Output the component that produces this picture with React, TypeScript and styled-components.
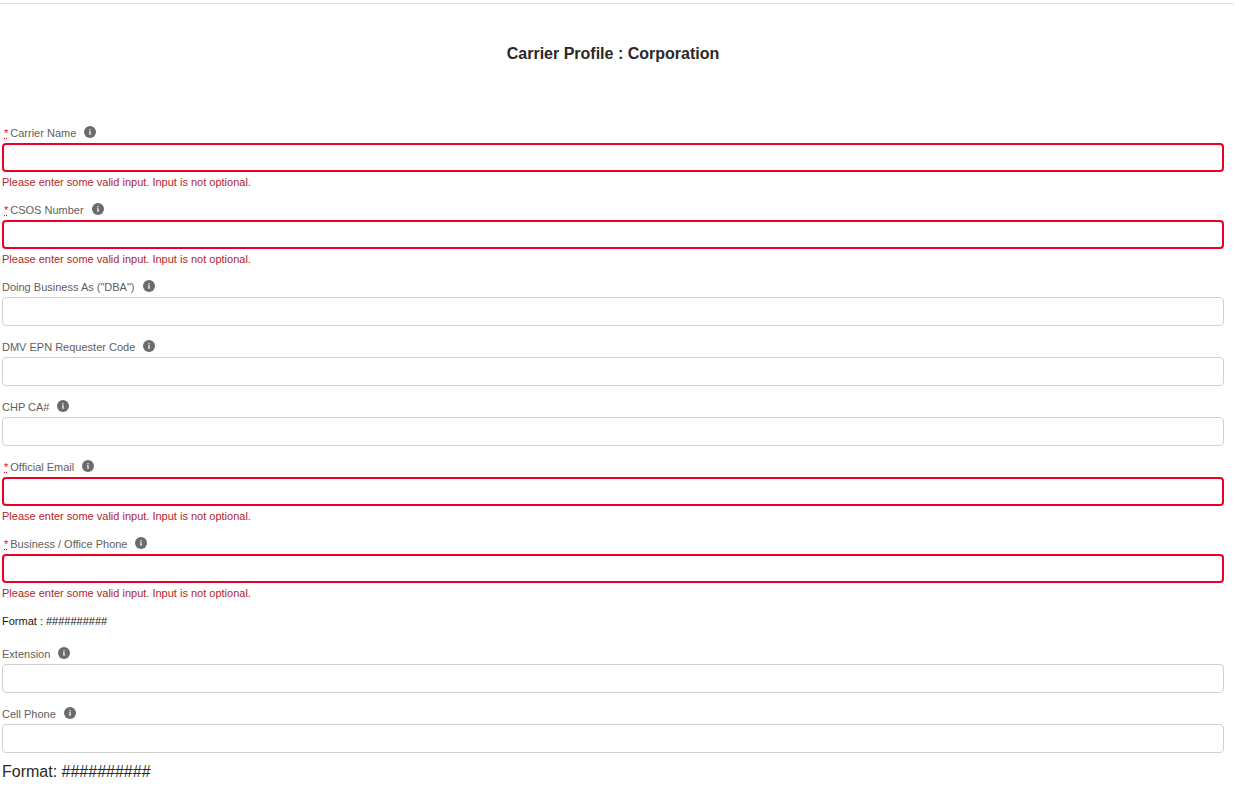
import React, { useId } from "react";
import styled, { createGlobalStyle } from "styled-components";

const GlobalStyle = createGlobalStyle`
  *, *::before, *::after { box-sizing: border-box; }
  body {
    margin: 0;
    background: #ffffff;
    color: #2b2826;
    font-family: "Liberation Sans", Arial, sans-serif;
  }
`;

const Page = styled.main`
  padding: 3px 5px 5px 0;
`;

const Divider = styled.hr`
  height: 1px;
  margin: 0;
  border: 0;
  background: #e2e2e2;
`;

const Form = styled.form`
  display: flex;
  flex-direction: column;
  gap: 13px;
  padding: 38px 10px 0 2px;
`;

const Title = styled.h1`
  margin: 0 0 46px;
  font-size: 16px;
  line-height: 24px;
  font-weight: 700;
  text-align: center;
`;

const FieldBox = styled.div`
  display: flex;
  flex-direction: column;
`;

const LabelRow = styled.div`
  display: flex;
  align-items: flex-start;
  gap: 8px;
  height: 18px;
`;

const Label = styled.label`
  color: #5f5e5c;
  font-size: 11px;
  line-height: 16px;
`;

const Required = styled.abbr`
  margin: 0 2px;
  color: #ea001e;
  text-decoration: underline dotted;
`;

const InfoButton = styled.button`
  display: flex;
  padding: 1px 0;
  border: 0;
  background: transparent;
  color: #6b6b6e;
  cursor: pointer;
`;

const TextInput = styled.input<{ $invalid?: boolean }>`
  width: 100%;
  height: 29px;
  padding: 0 12px;
  border: ${(p) => (p.$invalid ? "2px solid #ea0023" : "1px solid #d2d1d0")};
  border-radius: 4px;
  background: #ffffff;
  color: inherit;
  font: inherit;
  font-size: 12px;
  outline: none;
`;

const ErrorText = styled.div`
  padding-top: 3px;
  color: #b3262b;
  font-size: 11px;
  line-height: 14px;
`;

const FormatNote = styled.p`
  margin: 0 0 4px;
  color: #181818;
  font-size: 11px;
  line-height: 16px;
`;

const FormatLine = styled.p`
  margin: 7px 0 0;
  font-size: 16px;
  line-height: 24px;
`;

function InfoIcon() {
  return (
    <svg width="12" height="12" viewBox="0 0 12 12" aria-hidden="true">
      <circle cx="6" cy="6" r="6" fill="currentColor" />
      <circle cx="6" cy="3.7" r="0.75" fill="#fff" />
      <path
        d="M5 5.2h1.6v2.6h.5v.8H4.9v-.8h.5V6H5z"
        fill="#fff"
      />
    </svg>
  );
}

interface FieldProps {
  label: string;
  type?: string;
  required?: boolean;
  children?: React.ReactNode;
}

function Field({ label, type = "text", required, children }: FieldProps) {
  const id = useId();
  return (
    <FieldBox>
      <LabelRow>
        <Label htmlFor={id}>
          {required && <Required>*</Required>}
          {label}
        </Label>
        <InfoButton type="button" aria-label="Help">
          <InfoIcon />
        </InfoButton>
      </LabelRow>
      <TextInput
        id={id}
        type={type}
        $invalid={required}
        aria-invalid={required}
        aria-describedby={required ? `${id}-error` : undefined}
      />
      {required && (
        <ErrorText id={`${id}-error`}>
          Please enter some valid input. Input is not optional.
        </ErrorText>
      )}
      {children}
    </FieldBox>
  );
}

export default function App() {
  return (
    <>
      <GlobalStyle />
      <Page>
        <Divider />
        <Form noValidate>
          <Title>Carrier Profile : Corporation</Title>
          <Field label="Carrier Name" required />
          <Field label="CSOS Number" required />
          <Field label={'Doing Business As ("DBA")'} />
          <Field label="DMV EPN Requester Code" />
          <Field label="CHP CA#" />
          <Field label="Official Email" type="email" required />
          <Field label="Business / Office Phone" type="tel" required />
          <FormatNote>Format : ##########</FormatNote>
          <Field label="Extension" />
          <Field label="Cell Phone" type="tel">
            <FormatLine>Format: ##########</FormatLine>
          </Field>
        </Form>
      </Page>
    </>
  );
}
